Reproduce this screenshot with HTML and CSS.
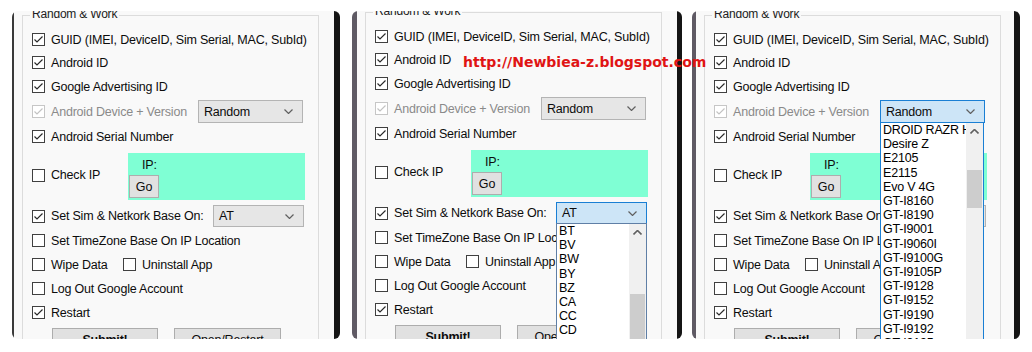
FILE: index.html
```html
<!DOCTYPE html>
<html>
<head>
<meta charset="utf-8">
<link rel="stylesheet" href="styles.css">
</head>
<body>
<div class="page">

  <!-- Panel 1 -->
  <div class="shot s1">
    <div class="edge el"></div>
    <div class="screen">
      <div class="group">
        <span class="legend">Random &amp; Work</span>
        <div class="rows">
          <div class="row h23"><label class="chk"><span class="box"><svg viewBox="0 0 11 11"><path d="M1.5 5.5L4 8L9.5 2.5"/></svg></span>GUID (IMEI, DeviceID, Sim Serial, MAC, SubId)</label></div>
          <div class="row h23"><label class="chk"><span class="box"><svg viewBox="0 0 11 11"><path d="M1.5 5.5L4 8L9.5 2.5"/></svg></span>Android ID</label></div>
          <div class="row h25"><label class="chk"><span class="box"><svg viewBox="0 0 11 11"><path d="M1.5 5.5L4 8L9.5 2.5"/></svg></span>Google Advertising ID</label></div>
          <div class="row h25"><label class="chk dis w166"><span class="box"><svg viewBox="0 0 11 11"><path d="M1.5 5.5L4 8L9.5 2.5"/></svg></span>Android Device + Version</label><div class="combo c-rand"><span>Random</span><svg class="chev" viewBox="0 0 9 5"><path d="M0.5 0.5L4.5 4.5L8.5 0.5"/></svg></div></div>
          <div class="row h25"><label class="chk"><span class="box"><svg viewBox="0 0 11 11"><path d="M1.5 5.5L4 8L9.5 2.5"/></svg></span>Android Serial Number</label></div>
          <div class="row iprow"><label class="chk w96 up2"><span class="box"></span>Check IP</label><div class="ip"><span class="ip-label">IP:</span><button class="btn go">Go</button></div></div>
          <div class="row h24 simrow"><label class="chk w181"><span class="box"><svg viewBox="0 0 11 11"><path d="M1.5 5.5L4 8L9.5 2.5"/></svg></span>Set Sim &amp; Netkork Base On:</label><div class="combo c-at"><span>AT</span><svg class="chev" viewBox="0 0 9 5"><path d="M0.5 0.5L4.5 4.5L8.5 0.5"/></svg></div></div>
          <div class="row h25"><label class="chk"><span class="box"></span>Set TimeZone Base On IP Location</label></div>
          <div class="row h23"><label class="chk w91"><span class="box"></span>Wipe Data</label><label class="chk"><span class="box"></span>Uninstall App</label></div>
          <div class="row h25"><label class="chk"><span class="box"></span>Log Out Google Account</label></div>
          <div class="row h23"><label class="chk"><span class="box"><svg viewBox="0 0 11 11"><path d="M1.5 5.5L4 8L9.5 2.5"/></svg></span>Restart</label></div>
          <div class="btns"><button class="btn big b">Submit!</button><button class="btn big open">Open/Restart</button></div>
        </div>
      </div>
    </div>
    <div class="edge er"></div>
  </div>

  <!-- Panel 2 -->
  <div class="shot s2">
    <div class="edge el"></div>
    <div class="screen">
      <div class="group">
        <span class="legend">Random &amp; Work</span>
        <div class="rows">
          <div class="row h23"><label class="chk"><span class="box"><svg viewBox="0 0 11 11"><path d="M1.5 5.5L4 8L9.5 2.5"/></svg></span>GUID (IMEI, DeviceID, Sim Serial, MAC, SubId)</label></div>
          <div class="row h23"><label class="chk"><span class="box"><svg viewBox="0 0 11 11"><path d="M1.5 5.5L4 8L9.5 2.5"/></svg></span>Android ID</label></div>
          <div class="row h25"><label class="chk"><span class="box"><svg viewBox="0 0 11 11"><path d="M1.5 5.5L4 8L9.5 2.5"/></svg></span>Google Advertising ID</label></div>
          <div class="row h25"><label class="chk dis w166"><span class="box"><svg viewBox="0 0 11 11"><path d="M1.5 5.5L4 8L9.5 2.5"/></svg></span>Android Device + Version</label><div class="combo c-rand"><span>Random</span><svg class="chev" viewBox="0 0 9 5"><path d="M0.5 0.5L4.5 4.5L8.5 0.5"/></svg></div></div>
          <div class="row h25"><label class="chk"><span class="box"><svg viewBox="0 0 11 11"><path d="M1.5 5.5L4 8L9.5 2.5"/></svg></span>Android Serial Number</label></div>
          <div class="row iprow"><label class="chk w96 up2"><span class="box"></span>Check IP</label><div class="ip"><span class="ip-label">IP:</span><button class="btn go">Go</button></div></div>
          <div class="row h24 simrow"><label class="chk w181"><span class="box"><svg viewBox="0 0 11 11"><path d="M1.5 5.5L4 8L9.5 2.5"/></svg></span>Set Sim &amp; Netkork Base On:</label><div class="combo c-at focus"><span>AT</span><svg class="chev" viewBox="0 0 9 5"><path d="M0.5 0.5L4.5 4.5L8.5 0.5"/></svg>
            <div class="list l-at">
              <div class="items"><div>BT</div><div>BV</div><div>BW</div><div>BY</div><div>BZ</div><div>CA</div><div>CC</div><div>CD</div><div>CF</div><div>CG</div></div>
              <div class="sbar"><div class="up"><svg viewBox="0 0 9 5"><path d="M0.5 4.5L4.5 0.5L8.5 4.5"/></svg></div><div class="thumb t-at"></div></div>
            </div>
          </div></div>
          <div class="row h25"><label class="chk"><span class="box"></span>Set TimeZone Base On IP Location</label></div>
          <div class="row h23"><label class="chk w91"><span class="box"></span>Wipe Data</label><label class="chk"><span class="box"></span>Uninstall App</label></div>
          <div class="row h25"><label class="chk"><span class="box"></span>Log Out Google Account</label></div>
          <div class="row h23"><label class="chk"><span class="box"><svg viewBox="0 0 11 11"><path d="M1.5 5.5L4 8L9.5 2.5"/></svg></span>Restart</label></div>
          <div class="btns"><button class="btn big b">Submit!</button><button class="btn big open">Open/Restart</button></div>
        </div>
      </div>
    </div>
    <div class="edge er"></div>
  </div>

  <!-- Panel 3 -->
  <div class="shot s3">
    <div class="edge el"></div>
    <div class="screen">
      <div class="group">
        <span class="legend">Random &amp; Work</span>
        <div class="rows">
          <div class="row h23"><label class="chk"><span class="box"><svg viewBox="0 0 11 11"><path d="M1.5 5.5L4 8L9.5 2.5"/></svg></span>GUID (IMEI, DeviceID, Sim Serial, MAC, SubId)</label></div>
          <div class="row h23"><label class="chk"><span class="box"><svg viewBox="0 0 11 11"><path d="M1.5 5.5L4 8L9.5 2.5"/></svg></span>Android ID</label></div>
          <div class="row h25"><label class="chk"><span class="box"><svg viewBox="0 0 11 11"><path d="M1.5 5.5L4 8L9.5 2.5"/></svg></span>Google Advertising ID</label></div>
          <div class="row h25"><label class="chk dis w166"><span class="box"><svg viewBox="0 0 11 11"><path d="M1.5 5.5L4 8L9.5 2.5"/></svg></span>Android Device + Version</label><div class="combo c-rand focus"><span>Random</span><svg class="chev" viewBox="0 0 9 5"><path d="M0.5 0.5L4.5 4.5L8.5 0.5"/></svg>
            <div class="list l-rand">
              <div class="items"><div>DROID RAZR HD</div><div>Desire Z</div><div>E2105</div><div>E2115</div><div>Evo V 4G</div><div>GT-I8160</div><div>GT-I8190</div><div>GT-I9001</div><div>GT-I9060I</div><div>GT-I9100G</div><div>GT-I9105P</div><div>GT-I9128</div><div>GT-I9152</div><div>GT-I9190</div><div>GT-I9192</div><div>GT-I9195</div></div>
              <div class="sbar"><div class="up"><svg viewBox="0 0 9 5"><path d="M0.5 4.5L4.5 0.5L8.5 4.5"/></svg></div><div class="thumb t-rand"></div></div>
            </div>
          </div></div>
          <div class="row h25"><label class="chk"><span class="box"><svg viewBox="0 0 11 11"><path d="M1.5 5.5L4 8L9.5 2.5"/></svg></span>Android Serial Number</label></div>
          <div class="row iprow"><label class="chk w96 up2"><span class="box"></span>Check IP</label><div class="ip"><span class="ip-label">IP:</span><button class="btn go">Go</button></div></div>
          <div class="row h24 simrow"><label class="chk w181"><span class="box"><svg viewBox="0 0 11 11"><path d="M1.5 5.5L4 8L9.5 2.5"/></svg></span>Set Sim &amp; Netkork Base On:</label><div class="combo c-at"><span>AT</span><svg class="chev" viewBox="0 0 9 5"><path d="M0.5 0.5L4.5 4.5L8.5 0.5"/></svg></div></div>
          <div class="row h25"><label class="chk"><span class="box"></span>Set TimeZone Base On IP Location</label></div>
          <div class="row h23"><label class="chk w91"><span class="box"></span>Wipe Data</label><label class="chk"><span class="box"></span>Uninstall App</label></div>
          <div class="row h25"><label class="chk"><span class="box"></span>Log Out Google Account</label></div>
          <div class="row h23"><label class="chk"><span class="box"><svg viewBox="0 0 11 11"><path d="M1.5 5.5L4 8L9.5 2.5"/></svg></span>Restart</label></div>
          <div class="btns"><button class="btn big b">Submit!</button><button class="btn big open">Open/Restart</button></div>
        </div>
      </div>
    </div>
    <div class="edge er"></div>
  </div>

  <div class="wm">http://Newbiea-z.blogspot.com</div>
</div>
</body>
</html>
```

FILE: styles.css
```css
html, body {
  margin: 0;
  background: #ffffff;
}

.page {
  position: relative;
  width: 1032px;
  height: 352px;
  box-sizing: border-box;
  padding: 11px 0 0 12px;
  display: flex;
  align-items: flex-start;
  overflow: hidden;
  font-family: "Liberation Sans", Arial, sans-serif;
}

.shot {
  flex: none;
  display: flex;
  height: 328px;
  border-radius: 6px;
  overflow: hidden;
}

.s2 { margin-left: 12px; }
.s3 { margin-left: 10px; }

.edge {
  flex: none;
  background: #151515;
}

.s1 .el { width: 2px; background: #3a3a3a; }
.s1 .er { width: 6px; }
.s2 .el { width: 5px; background: #5f5a64; }
.s2 .er { width: 5px; }
.s3 .el { width: 4px; background: #5f5a64; }
.s3 .er { width: 6px; }

.screen {
  flex: none;
  width: 320px;
  background: #f9f9f9;
  color: #0c0c0c;
  font-size: 12.5px;
  letter-spacing: -0.2px;
}

.s3 .screen { width: 318px; }

.group {
  margin: 4px 0 0 8px;
  width: 297px;
  height: 400px;
  box-sizing: border-box;
  border: 1px solid #dcdcdc;
  border-bottom: none;
}

.s2 .group { margin-top: 1px; }

.legend {
  display: block;
  width: max-content;
  margin: -9px 0 0 7px;
  padding: 0 2px;
  background: #f9f9f9;
  font-size: 12px;
  line-height: 14px;
  color: #222;
}

.rows {
  margin-top: 7px;
  padding-left: 9px;
}

.row {
  display: flex;
  align-items: center;
}

.h23 { height: 23px; }
.h24 { height: 24px; }
.h25 { height: 25px; }

.chk {
  flex: none;
  display: flex;
  align-items: center;
  gap: 6px;
  white-space: nowrap;
}

.w166 { width: 166px; }
.w181 { width: 181px; }
.w96 { width: 96px; }
.w91 { width: 91px; }

.up2 { padding-bottom: 3px; }

.box {
  flex: none;
  display: flex;
  width: 13px;
  height: 13px;
  box-sizing: border-box;
  border: 1px solid #404040;
  background: #ffffff;
}

.box svg {
  width: 11px;
  height: 11px;
}

.box path {
  fill: none;
  stroke: #2a2a2a;
  stroke-width: 1.2;
}

.dis { color: #8a8a8a; }
.dis .box { border-color: #c6c6c6; }
.dis .box path { stroke: #c2c2c2; }

.combo {
  position: relative;
  flex: none;
  box-sizing: border-box;
  display: flex;
  align-items: center;
  justify-content: space-between;
  padding: 0 9px 0 5px;
  border: 1px solid #b4b4b4;
  background: #e6e6e6;
  color: #0c0c0c;
}

.combo.focus {
  border-color: #1a7fd4;
  background: #cde5f7;
}

.c-rand { width: 105px; height: 23px; }
.c-at { width: 91px; height: 22px; }

.chev {
  width: 9px;
  height: 5px;
  flex: none;
}

.chev path,
.up path {
  fill: none;
  stroke: #606060;
  stroke-width: 1.2;
}

.iprow { margin-top: 4px; }
.simrow { margin-top: 4px; }

.ip {
  flex: none;
  width: 177px;
  height: 47px;
  display: flex;
  flex-direction: column;
  align-items: flex-start;
  background: #7fffd4;
}

.ip-label {
  padding: 5px 0 0 14px;
  line-height: 14px;
}

.btn {
  box-sizing: border-box;
  border: 1px solid #adadad;
  background: #e1e1e1;
  color: #0c0c0c;
  font-family: inherit;
  font-size: 12.5px;
  letter-spacing: -0.2px;
  padding: 0;
  margin: 0;
}

.go {
  width: 30px;
  height: 23px;
  margin: auto 0 2px 1px;
}

.btns {
  display: flex;
  gap: 16px;
  margin-top: 4px;
  padding-left: 20px;
}

.big {
  width: 106px;
  height: 23px;
}

.open { width: 107px; }
.b { font-weight: bold; }

.list {
  position: absolute;
  left: -1px;
  top: 100%;
  z-index: 3;
  display: flex;
  height: 240px;
  box-sizing: border-box;
  background: #ffffff;
  border: 1px solid #1a7fd4;
}

.l-at {
  width: 91px;
  border-color: #5f7fa6;
}

.l-rand { width: 104px; }

.items {
  flex: 1;
  min-width: 0;
  overflow: hidden;
  padding-left: 2px;
  white-space: nowrap;
  font-size: 12.5px;
  line-height: 14.2px;
  letter-spacing: -0.2px;
  color: #000;
}

.sbar {
  position: relative;
  flex: none;
  width: 17px;
  background: #f0f0f0;
}

.up {
  display: flex;
  align-items: center;
  justify-content: center;
  height: 17px;
}

.up svg {
  width: 9px;
  height: 5px;
}

.up path { stroke-width: 1.6; }

.thumb {
  position: absolute;
  left: 1px;
  right: 1px;
  background: #cdcdcd;
}

.t-at { top: 70px; height: 200px; }
.t-rand { top: 47px; height: 38px; }

.wm {
  position: absolute;
  left: 463px;
  top: 54px;
  z-index: 10;
  font-family: "DejaVu Sans", Verdana, sans-serif;
  font-weight: bold;
  font-size: 14px;
  line-height: 16px;
  color: #e01414;
  white-space: nowrap;
}
```
